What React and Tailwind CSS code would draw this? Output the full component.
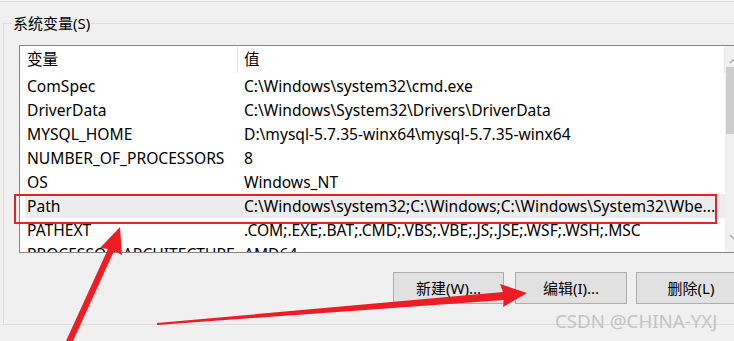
import React from "react";

const rows = [
    ["ComSpec", "C:\\Windows\\system32\\cmd.exe"],
    ["DriverData", "C:\\Windows\\System32\\Drivers\\DriverData"],
    ["MYSQL_HOME", "D:\\mysql-5.7.35-winx64\\mysql-5.7.35-winx64"],
    ["NUMBER_OF_PROCESSORS", "8"],
    ["OS", "Windows_NT"],
    ["Path", "C:\\Windows\\system32;C:\\Windows;C:\\Windows\\System32\\Wbe..."],
    ["PATHEXT", ".COM;.EXE;.BAT;.CMD;.VBS;.VBE;.JS;.JSE;.WSF;.WSH;.MSC"],
    ["PROCESSOR_ARCHITECTURE", "AMD64"],
];

const font = { fontFamily: '"Noto Sans", "Noto Sans CJK SC", sans-serif' };

const App = () => {
    return (
        <div
            className="relative w-[734px] h-[341px] overflow-hidden bg-[#f0f0f0] text-black text-[15px]"
            style={font}
        >
            {/* top edge */}
            <div className="h-[1px] bg-[#f7f7f7]" />
            <div className="h-[1px] bg-[#dadada]" />

            {/* GROUP BOX */}
            <div className="relative ml-[3px] mt-[21px] h-[302px] w-[760px] border border-[#dcdcdc]">
                <span className="absolute -top-[12px] left-[8px] bg-[#f0f0f0] px-[1px] leading-[22px]">
                    系统变量(S)
                </span>

                {/* LIST */}
                <div className="ml-[15px] mt-[21px] flex h-[208px] w-[760px] border border-[#828790] bg-white text-[15.6px]">
                    <div className="w-[705px] overflow-hidden">
                        <div className="flex h-[28px] items-center">
                            <div className="w-[217px] pl-[7px]">变量</div>
                            <div className="flex h-[26px] w-[488px] items-center border-l border-r border-[#e5e5e5] pl-[6px]">
                                值
                            </div>
                        </div>
                        {rows.map(([name, value]) => (
                            <div
                                key={name}
                                className={
                                    "ml-[5px] flex h-[24px] w-[700px] items-center whitespace-nowrap leading-[22px] " +
                                    (name === "Path" ? "bg-[#ececec]" : "")
                                }
                            >
                                <div className="w-[212px] pl-[2px]">{name}</div>
                                <div className="pl-[7px]">{value}</div>
                            </div>
                        ))}
                    </div>

                    {/* SCROLLBAR */}
                    <div className="flex w-[17px] flex-col bg-[#f0f0f0]">
                        <div className="flex h-[21px] items-end justify-center pb-[3px]">
                            <svg width="9" height="6" viewBox="0 0 9 6">
                                <path d="M1 5 L4.5 1.5 L8 5" fill="none" stroke="#a0a0a0" strokeWidth="1.2" />
                            </svg>
                        </div>
                        <div className="ml-[1px] h-[67px] w-[15px] bg-[#cdcdcd]" />
                        <div className="flex-1" />
                        <div className="flex h-[18px] items-start justify-center">
                            <svg width="9" height="6" viewBox="0 0 9 6">
                                <path d="M1 1 L4.5 4.5 L8 1" fill="none" stroke="#a0a0a0" strokeWidth="1.2" />
                            </svg>
                        </div>
                    </div>
                </div>

                {/* BUTTONS */}
                <div className="ml-[389px] mt-[19px] flex">
                    <button className="h-[32px] w-[111px] border border-[#adadad] bg-[#e1e1e1] text-[15px]">
                        新建(W)...
                    </button>
                    <button className="ml-[11px] h-[32px] w-[112px] border border-[#adadad] bg-[#e1e1e1] text-[15px]">
                        编辑(I)...
                    </button>
                    <button className="ml-[9px] h-[32px] w-[110px] border border-[#adadad] bg-[#e1e1e1] text-[15px]">
                        删除(L)
                    </button>
                </div>
            </div>

            {/* ANNOTATIONS */}
            <div className="absolute left-[14px] top-[194px] h-[30px] w-[703px] border-2 border-[#e8202a]" />

            <span className="absolute left-[555px] top-[308px] text-[18.7px] leading-[26px] text-[#c4c4c4]">
                CSDN @CHINA-YXJ
            </span>

            <svg className="absolute left-0 top-0" width="734" height="341" viewBox="0 0 734 341">
                <polygon
                    points="66,341 108,249 100,248 120,227 122,255 114,251 73,341"
                    fill="#ee1c25"
                />
                <polygon
                    points="157,323 503,292 500,284 527,293 503,307 504,300 157,325"
                    fill="#ee1c25"
                />
            </svg>
        </div>
    );
};

export default App;
